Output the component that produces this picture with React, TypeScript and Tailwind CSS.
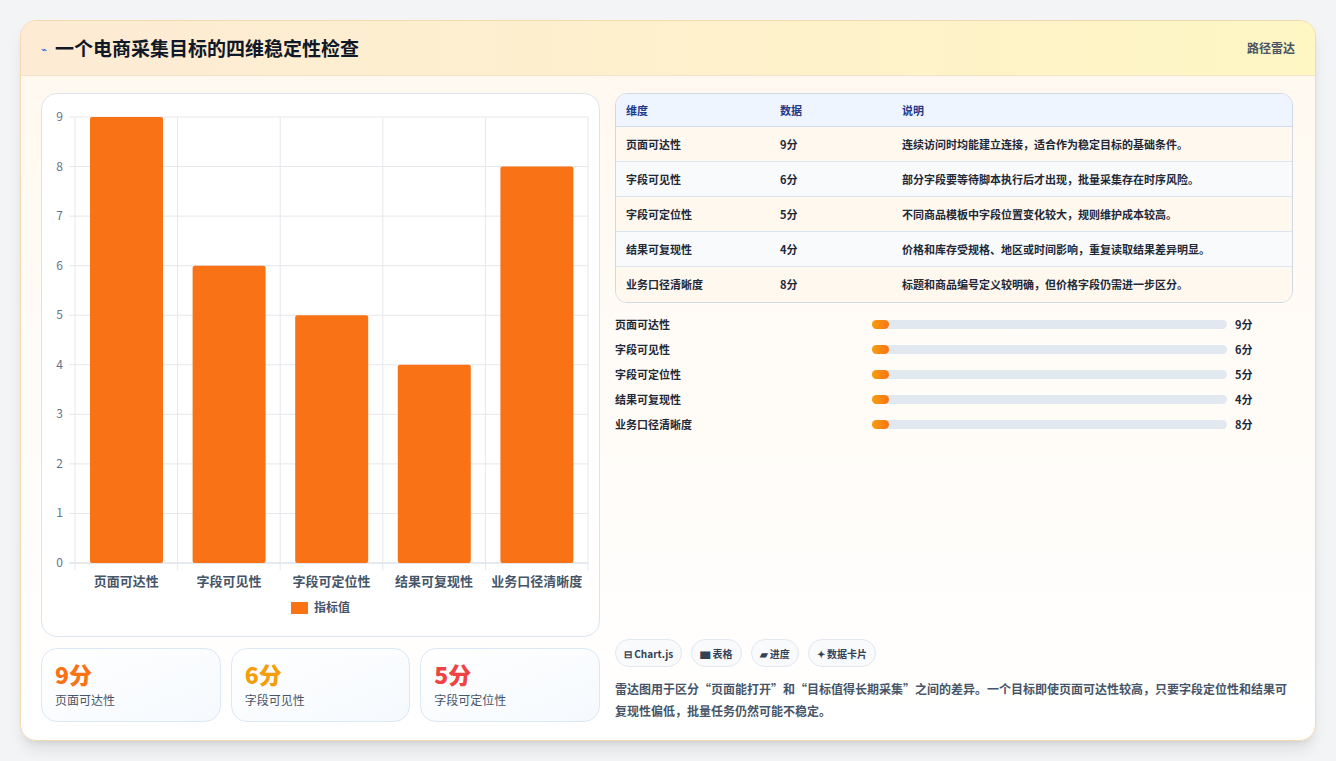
import React from "react";

const data = [
  { n: "页面可达性", v: 9, d: "连续访问时均能建立连接，适合作为稳定目标的基础条件。" },
  { n: "字段可见性", v: 6, d: "部分字段要等待脚本执行后才出现，批量采集存在时序风险。" },
  { n: "字段可定位性", v: 5, d: "不同商品模板中字段位置变化较大，规则维护成本较高。" },
  { n: "结果可复现性", v: 4, d: "价格和库存受规格、地区或时间影响，重复读取结果差异明显。" },
  { n: "业务口径清晰度", v: 8, d: "标题和商品编号定义较明确，但价格字段仍需进一步区分。" },
];

function Chart() {
  const x0 = 33, x1 = 546, y0 = 23, y9 = 469;
  const cw = (x1 - x0) / 5;
  const u = (y9 - y0) / 9;
  return (
    <svg width="558" height="543" className="block">
      {Array.from({ length: 10 }).map((_, i) => {
        const y = y9 - i * u;
        return (
          <g key={i}>
            <line x1={x0 - 6} x2={x1} y1={y} y2={y} stroke={i === 0 ? "#cbd5e1" : "#e5e7eb"} />
            <text x={x0 - 12} y={y + 4} fontSize="12" fill="#64748b" textAnchor="end">{i}</text>
          </g>
        );
      })}
      {Array.from({ length: 6 }).map((_, i) => (
        <line key={i} x1={x0 + i * cw} x2={x0 + i * cw} y1={y0} y2={y9 + 7} stroke="#e5e7eb" />
      ))}
      {data.map((d, i) => {
        const bx = x0 + i * cw + 15;
        const h = d.v * u;
        return (
          <g key={d.n}>
            <rect x={bx} y={y9 - h} width={73} height={h} rx="2" fill="#f97316" />
            <text x={x0 + i * cw + cw / 2} y={492} fontSize="13" fill="#475569" textAnchor="middle" fontWeight="600">{d.n}</text>
          </g>
        );
      })}
      <rect x={249} y={508} width={17} height={12} fill="#f97316" />
      <text x={272} y={518} fontSize="12" fill="#475569" fontWeight="600">指标值</text>
    </svg>
  );
}

export default function App() {
  return (
    <div className="min-h-[761px] bg-[#f3f4f6] p-5 pb-5" style={{ fontFamily: '"Noto Sans CJK SC", "Noto Sans", sans-serif' }}>
      <div className="rounded-2xl border border-[#f5d9b0] overflow-hidden shadow-lg bg-gradient-to-b from-[#fff8ef] to-white">
        <div className="h-[55px] flex items-center justify-between px-5 bg-gradient-to-r from-[#fdebd5] to-[#fef6c3] border-b border-[#f3e3c9]">
          <div className="flex items-center gap-2">
            <span className="text-[10px] text-[#3b5bdb]">⌁</span>
            <span className="text-[19px] font-bold text-[#111827]">一个电商采集目标的四维稳定性检查</span>
          </div>
          <span className="text-[12px] font-semibold text-[#4b5563]">路径雷达</span>
        </div>
        <div className="flex gap-[15px] px-5 pt-[17px] pb-[18px]">
          <div className="w-[559px] flex flex-col gap-[11px]">
            <div className="h-[544px] rounded-2xl border border-[#dbe4ee] bg-white">
              <Chart />
            </div>
            <div className="flex gap-[10px]">
              {[
                ["9分", "页面可达性", "text-[#f97316]"],
                ["6分", "字段可见性", "text-[#f59e0b]"],
                ["5分", "字段可定位性", "text-[#ef4444]"],
              ].map(([a, b, c]) => (
                <div key={b} className="flex-1 h-[74px] rounded-2xl border border-[#dbe8f5] bg-gradient-to-br from-white to-[#f5f9fd] px-[13px] pt-[10px]">
                  <div className={`text-[23px] font-extrabold leading-[30px] ${c}`}>{a}</div>
                  <div className="text-[12px] text-[#475569] mt-[2px]">{b}</div>
                </div>
              ))}
            </div>
          </div>
          <div className="flex-1 flex flex-col">
            <div className="rounded-xl border border-[#cfd9e6] overflow-hidden mr-[2px]">
              <div className="flex h-[33px] items-center bg-[#eef5fe] border-b border-[#cfdcec] text-[11px] font-semibold text-[#1e3a8a]">
                <div className="w-[164px] pl-[10px]">维度</div>
                <div className="w-[122px]">数据</div>
                <div>说明</div>
              </div>
              {data.map((d, i) => (
                <div key={d.n} className={`flex h-[35px] items-center text-[11px] text-[#1f2937] font-semibold ${i % 2 ? "bg-[#f8fafc]" : "bg-[#fff8ef]"} ${i < 4 ? "border-b border-[#dde5ef]" : ""}`}>
                  <div className="w-[164px] pl-[10px]">{d.n}</div>
                  <div className="w-[122px]">{d.v}分</div>
                  <div>{d.d}</div>
                </div>
              ))}
            </div>
            <div className="flex flex-col gap-[7px] mt-[12px]">
              {data.map((d) => (
                <div key={d.n} className="flex items-center h-[18px] text-[11px] font-semibold text-[#1f2937]">
                  <div className="w-[257px]">{d.n}</div>
                  <div className="w-[355px] h-[9px] rounded-full bg-[#e2e8f0]">
                    <div className="w-[17px] h-[9px] rounded-full bg-gradient-to-r from-[#f59e0b] to-[#f97316]" />
                  </div>
                  <div className="ml-[8px] font-bold">{d.v}分</div>
                </div>
              ))}
            </div>
            <div className="flex-1" />
            <div className="flex gap-[9px]">
              {["⊟ Chart.js", "▆ 表格", "▰ 进度", "✦ 数据卡片"].map((t) => (
                <span key={t} className="h-[28px] px-[8px] flex items-center rounded-full border border-[#e2e8f0] bg-[#f8fafc] text-[10px] font-semibold text-[#334155]">{t}</span>
              ))}
            </div>
            <p className="mt-[11px] text-[12px] leading-[22px] text-[#475569] font-semibold">
              雷达图用于区分“页面能打开”和“目标值得长期采集”之间的差异。一个目标即使页面可达性较高，只要字段定位性和结果可复现性偏低，批量任务仍然可能不稳定。
            </p>
          </div>
        </div>
      </div>
    </div>
  );
}
